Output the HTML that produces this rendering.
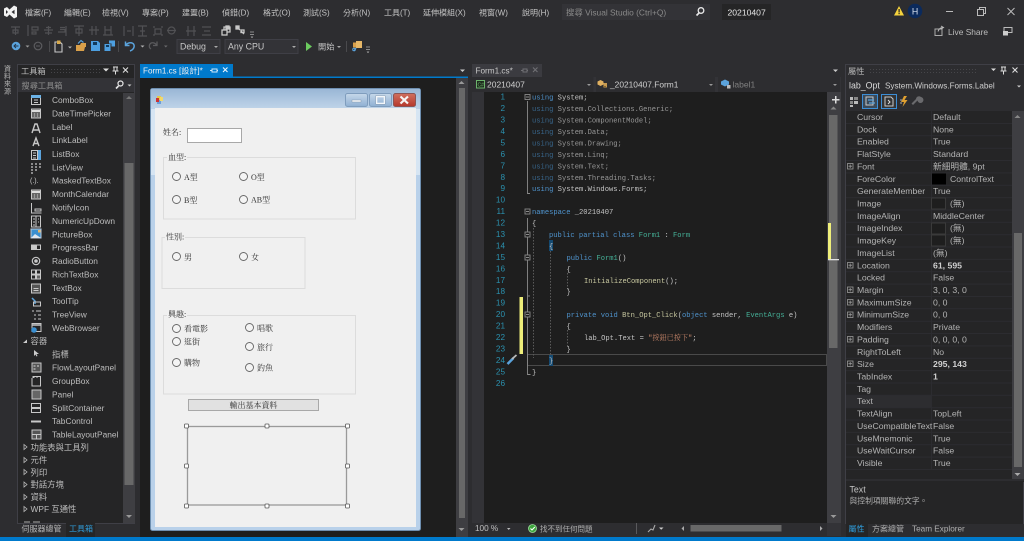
<!DOCTYPE html>
<html><head><meta charset="utf-8"><style>
html,body{margin:0;padding:0;background:#2d2d30;width:1024px;height:541px;overflow:hidden}
svg{display:block;position:absolute;left:0;top:0;filter:blur(.3px)}
text{font-family:"Liberation Sans","Noto Sans CJK TC",sans-serif;font-size:8.6px;fill:#c8c8c8;white-space:pre}
.m text{font-size:8px;fill:#c4c4c4}
.d text{font-size:8.35px;fill:#bdbdbd}
.p text{font-size:8.7px;fill:#b4b4b4}
.f text{font-family:"Liberation Serif","Noto Serif CJK TC",serif;font-size:8px;fill:#333}
.c text{font-family:"Liberation Mono","Noto Serif CJK TC",monospace;font-size:7.13px;fill:#c4c4c4}
.n text{font-family:"Liberation Sans",sans-serif;font-size:8.2px;fill:#2b91af;text-anchor:end}
.k{fill:#4f93cc!important}.uk{fill:#38658a!important}.ty{fill:#45b097!important}.s{fill:#c8866a!important}.u{fill:#979797!important}.me{fill:#c8c8a0!important}
</style></head><body>
<svg width="1024" height="541" viewBox="0 0 1024 541">
<defs>
<linearGradient id="tg" x1="0" y1="0" x2="0" y2="1"><stop offset="0" stop-color="#9ab7d6"/><stop offset="1" stop-color="#bed3e8"/></linearGradient>
<linearGradient id="cg" x1="0" y1="0" x2="0" y2="1"><stop offset="0" stop-color="#d0705f"/><stop offset="1" stop-color="#b5382c"/></linearGradient>
<linearGradient id="bg" x1="0" y1="0" x2="0" y2="1"><stop offset="0" stop-color="#c6d8ea"/><stop offset="1" stop-color="#8fb0d2"/></linearGradient>
<pattern id="dots" width="3" height="3" patternUnits="userSpaceOnUse"><rect width="1" height="1" fill="#46464a"/></pattern>
</defs>
<rect width="1024" height="541" fill="#2d2d30"/>
<!-- VS logo -->
<path d="M4 8.500 7 7 9.500 9.500 14 5.500 17 7v10l-3 1.500-4.500-4L7 17l-3-1.500zM6 10v4l2-2zM11.500 12 14.500 14.300V9.700z" fill="#f2f2f2" fill-rule="evenodd"/>
<g class="m">
<text x="25" y="15.500">檔案(F)</text><text x="64" y="15.500">編輯(E)</text><text x="102" y="15.500">檢視(V)</text><text x="142" y="15.500">專案(P)</text><text x="182" y="15.500">建置(B)</text><text x="222" y="15.500">偵錯(D)</text><text x="263" y="15.500">格式(O)</text><text x="303" y="15.500">測試(S)</text><text x="343" y="15.500">分析(N)</text><text x="384" y="15.500">工具(T)</text><text x="423" y="15.500">延伸模組(X)</text><text x="479" y="15.500">視窗(W)</text><text x="522" y="15.500">說明(H)</text>
</g>
<!-- search + title -->
<rect x="562" y="4" width="148" height="16" fill="#333337"/>
<text x="566" y="15.500" style="fill:#8a8a8a;font-size:8.400px">搜尋 Visual Studio (Ctrl+Q)</text>
<circle cx="701" cy="10.500" r="2.800" fill="none" stroke="#e8e8e8" stroke-width="1.300"/><path d="M699 13 696.500 15.500" stroke="#e8e8e8" stroke-width="1.700"/>
<rect x="722" y="4" width="49" height="16" fill="#252526"/>
<text x="727.500" y="15.500" style="fill:#e6e6e6;font-size:8.600px">20210407</text>
<path d="M899 6 904 15.500H894z" fill="#f5d33d"/><rect x="898.500" y="9" width="1.200" height="3.500" fill="#222"/><rect x="898.500" y="13" width="1.200" height="1.200" fill="#222"/>
<circle cx="915" cy="11" r="7.300" fill="#0b2a5c"/><text x="915" y="14.300" text-anchor="middle" style="fill:#d8e2f0;font-size:8.800px">H</text>
<path d="M946 11.500h7" stroke="#bbb"/>
<rect x="977.500" y="9.500" width="6" height="6" fill="none" stroke="#bbb"/><path d="M979.500 9.500V7.500h6v6h-2" fill="none" stroke="#bbb"/>
<path d="M1007.500 8l7 7m0-7-7 7" stroke="#bbb"/>
<!-- toolbar row 1 -->
<rect x="4" y="25" width="1" height="11" fill="url(#dots)"/>
<g stroke="#515154" fill="none" stroke-width="1.200">
<path d="M11 27h9M15.500 27v8M13 30h5v3h-5z"/>
<path d="M28 25v11M32 27h6v3h-6zM32 32h4v2h-4z"/><path d="M44 30h9M48.500 26v9M46 27.500h5M45 33h7"/>
<path d="M66 26v10M60 27.500h5M58 32h7M60 29.500h5v3"/><path d="M74 26h10M79 26v10M76 29h6v4h-6z"/><path d="M89 30h10M92 26v9M96 26v9"/>
<path d="M103 35h10M105 26v9M111 26v9M105 30h6"/><path d="M124 26v10M133 26v10M127 31h4"/><path d="M138 26h9M138 36h9M142.500 26v10M140 31h5"/>
<path d="M153 27h2M161 27h2M153 35h2M161 35h2M155 29h6v5h-6z"/><circle cx="171.500" cy="30.500" r="3.500"/><path d="M167 30.500h9"/>
<path d="M188 26v10M194 26v10M186 31h10"/><path d="M202 27h9M202 35h9M204 31h6"/>
</g>
<g stroke="#c8c8c8" fill="none" stroke-width="1.300">
<rect x="222" y="30" width="5" height="5"/><path d="M224 30v-3h6v5h-3"/><rect x="226" y="26" width="3" height="3" fill="#c8c8c8"/>
<path d="M237 27l3 3m1 1 3 3"/><rect x="236" y="26" width="3" height="3" fill="#c8c8c8"/><rect x="241" y="30" width="3" height="2.500"/>
</g>
<path d="M250 32h4M250 34.500h4M251 36.500l1 1 1-1" stroke="#aaa" stroke-width=".8" fill="none"/>
<!-- toolbar row 2 -->
<circle cx="16" cy="46" r="4.300" fill="#5ba3dc"/><path d="M18.500 46h-4.500m2-2-2 2 2 2" stroke="#20364c" fill="none"/>
<path d="M25.500 45.500h4l-2 2z" fill="#9a9a9a"/>
<circle cx="38" cy="46" r="3.800" fill="none" stroke="#5c5c5f" stroke-width="1.200"/><path d="M36 46h4" stroke="#5c5c5f"/>
<path d="M49.500 41v11" stroke="#4a4a4d"/>
<path d="M55 42h5l2 2v8h-7z" fill="none" stroke="#c8c8c8" stroke-width="1.100"/><rect x="57" y="40.500" width="3.500" height="3.500" fill="#d6a94c"/>
<path d="M68 46.500h4l-2 2z" fill="#b0b0b0"/>
<path d="M76 45h4l1-2h5v4h-1l-1 4H76z" fill="#d9a04a"/><path d="M78 43.500l3-3 2.500 2" stroke="#5ba3dc" fill="none" stroke-width="1.200"/>
<path d="M91 41h7l2 2v8h-9z" fill="#4d9fe0"/><rect x="93" y="42" width="4" height="3" fill="#123a5c"/>
<path d="M104.500 44h6v7h-6z" fill="#4d9fe0"/><path d="M109 40.500h6v6h-3.500v-3H109z" fill="#4d9fe0"/><rect x="106" y="45" width="3" height="2" fill="#123a5c"/>
<path d="M118.500 41v11" stroke="#4a4a4d"/>
<path d="M125.500 41.500v4h4M126 45c2-3 7-3 8 0 .7 2.500-1 5-4 6" fill="none" stroke="#5ba3dc" stroke-width="1.500"/>
<path d="M140.500 45.500h4l-2 2z" fill="#b0b0b0"/>
<path d="M157 41.500v4h-4M156.500 45c-2-3-6-3-7 0-.5 1.500 0 3 1.500 4" fill="none" stroke="#5a5a5d" stroke-width="1.300"/>
<path d="M164 45.500h3.600l-1.800 2z" fill="#6a6a6d"/>
<rect x="177" y="39.500" width="43" height="14" fill="#333337" stroke="#3f3f46"/>
<text x="180" y="49.500" style="fill:#c8c8c8;font-size:8.800px">Debug</text><path d="M214 46h4l-2 2z" fill="#aaa"/>
<rect x="225" y="39.500" width="73" height="14" fill="#333337" stroke="#3f3f46"/>
<text x="228" y="49.500" style="fill:#c8c8c8;font-size:8.800px">Any CPU</text><path d="M292 46h4l-2 2z" fill="#aaa"/>
<path d="M306 42l6 4.500-6 4.500z" fill="#6ccb5f"/>
<text x="318" y="49.500" style="font-size:8.200px;fill:#c8c8c8">開始</text><path d="M337 46h4l-2 2z" fill="#aaa"/>
<path d="M346.500 41v11" stroke="#4a4a4d"/>
<rect x="353" y="42.500" width="6" height="5" fill="#d9a04a"/><rect x="356" y="41" width="6" height="7" fill="#e5b768"/><path d="M356 48l-2 3" stroke="#5ba3dc" stroke-width="1.300"/><circle cx="354" cy="49.500" r="1.300" fill="none" stroke="#5ba3dc"/>
<path d="M366 47h4M366 49.500h4M367 51.500l1 1 1-1" stroke="#aaa" stroke-width=".8" fill="none"/>
<!-- live share -->
<rect x="935" y="29" width="7" height="6.500" fill="none" stroke="#aaa"/><path d="M938 31.500c1-3 3-4 5-4m-2-1.500 2.500 1.500-2.500 1.500" fill="none" stroke="#bbb"/>
<text x="948" y="34.800" style="font-size:8.400px;fill:#bcbcbc">Live Share</text>
<rect x="1004" y="27.500" width="8" height="5" fill="none" stroke="#bbb"/><rect x="1003" y="31" width="5" height="4.500" fill="#ccc"/>
<!-- left strip -->
<g><text x="4" y="71" style="font-size:7px;fill:#b4b4b4">資</text><text x="4" y="78.500" style="font-size:7px;fill:#b4b4b4">料</text><text x="4" y="86" style="font-size:7px;fill:#b4b4b4">來</text><text x="4" y="93.500" style="font-size:7px;fill:#b4b4b4">源</text></g>
<!-- toolbox -->
<rect x="17" y="64" width="118" height="460" fill="#252526"/>
<rect x="17.500" y="64.500" width="117" height="459" fill="none" stroke="#3f3f46"/>
<text x="21" y="73.800" style="fill:#bcbcbc;font-size:8.200px">工具箱</text>
<rect x="50" y="67" width="51" height="6" fill="url(#dots)"/>
<path d="M103 68.500h6l-3 3z" fill="#ddd"/><path d="M113 67h5M114 67v4h3v-4M112.500 71h6M115.500 71v3.500" stroke="#ddd" fill="none"/><path d="M123 67.500l5 5m0-5-5 5" stroke="#ddd" stroke-width="1.100"/>
<rect x="18" y="78" width="116" height="14" fill="#333337"/>
<text x="21.500" y="88.500" style="fill:#8e8e8e;font-size:8.200px">搜尋工具箱</text>
<circle cx="120.500" cy="83.500" r="2.500" fill="none" stroke="#e8e8e8" stroke-width="1.200"/><path d="M118.500 86l-2.500 2.500" stroke="#e8e8e8" stroke-width="1.600"/><path d="M127.500 84.500h4l-2 2z" fill="#ccc"/>
<rect x="123" y="93" width="12" height="430" fill="#3e3e42"/><rect x="124.500" y="163" width="9" height="322" fill="#686868"/>
<path d="M129 96l-3 3h6z" fill="#777"/><path d="M129 518l3-3h-6z" fill="#999"/>
<g class="d">
<text x="52" y="103">ComboBox</text><text x="52" y="116.500">DateTimePicker</text><text x="52" y="130">Label</text><text x="52" y="143">LinkLabel</text><text x="52" y="157">ListBox</text><text x="52" y="170.500">ListView</text><text x="52" y="183.500">MaskedTextBox</text><text x="52" y="197">MonthCalendar</text><text x="52" y="210.500">NotifyIcon</text><text x="52" y="224">NumericUpDown</text><text x="52" y="237.500">PictureBox</text><text x="52" y="250.500">ProgressBar</text><text x="52" y="264">RadioButton</text><text x="52" y="277.500">RichTextBox</text><text x="52" y="291">TextBox</text><text x="52" y="304">ToolTip</text><text x="52" y="317.500">TreeView</text><text x="52" y="331">WebBrowser</text>
<text x="30.500" y="344">容器</text><text x="52" y="357.500">指標</text><text x="52" y="370.500">FlowLayoutPanel</text><text x="52" y="384">GroupBox</text><text x="52" y="397.500">Panel</text><text x="52" y="411">SplitContainer</text><text x="52" y="424">TabControl</text><text x="52" y="437.500">TableLayoutPanel</text>
<text x="30.500" y="450.500">功能表與工具列</text><text x="30.500" y="463">元件</text><text x="30.500" y="475.500">列印</text><text x="30.500" y="487.500">對話方塊</text><text x="30.500" y="500">資料</text><text x="30.500" y="512">WPF 互通性</text>
</g>
<path d="M23 343l4-3.500V343z" fill="#ccc"/>
<path d="M24 444.500l3 2.500-3 2.500zM24 457.500l3 2.500-3 2.500zM24 469.500l3 2.500-3 2.500zM24 482l3 2.500-3 2.500zM24 494.500l3 2.500-3 2.500zM24 506.500l3 2.500-3 2.500z" fill="none" stroke="#bbb" stroke-width=".8"/>
<path d="M24 522h6M33 522h7" stroke="#aaa"/>
<!-- toolbox icons -->
<g fill="none" stroke="#c8c8c8" stroke-width="1">
<rect x="31.500" y="95.500" width="9" height="9"/><rect x="31" y="95" width="10" height="3" fill="#6bb2e6" stroke="none"/><path d="M34 100h4M34 102.500h4"/>
<rect x="31.500" y="109" width="9" height="9" fill="#666"/><path d="M32 111h8" stroke="#ddd" stroke-width="2"/><path d="M34 114h1M37 114h1M34 116h1M37 116h1"/>
<path d="M32 133l3-9h2l3 9M33.500 130h5" stroke-width="1.400"/>
<path d="M33 146l3-8 3 8M34 143.500h4" stroke-width="1.400"/>
<rect x="31.500" y="150.500" width="6" height="9"/><path d="M33 153h3M33 155.500h3M33 158h3"/><rect x="38" y="150" width="3" height="10" fill="#5ba3dc" stroke="none"/>
<path d="M31 164h2M35 164h2M39 164h2M31 167h2M35 167h2M39 167h2M31 170h2M35 170h2M31 173h2" stroke-width="1.300"/>
<text x="30" y="183" style="font-size:7px;fill:#ccc;stroke:none">(.).</text>
<rect x="31.500" y="190" width="9" height="9" fill="#666"/><path d="M32 192h8" stroke="#ddd" stroke-width="2"/><path d="M34 195h1M37 195h1M34 197h1M37 197h1"/>
<path d="M31.500 203v10h10M35 209h6v2h-6z"/>
<rect x="31.500" y="216" width="9" height="11"/><path d="M36 216v11M33 219h2M33 222h2M33 225h2M38 219h1M38 222h1"/>
<rect x="31" y="229" width="10" height="9" fill="#3a8fd0" stroke="#bcd"/><path d="M31 238l4-4 6 4" fill="#dfe6ee" stroke="none"/><rect x="38" y="230" width="2.500" height="2.500" fill="#e5b768" stroke="none"/>
<rect x="31.500" y="245" width="9" height="4.500"/><rect x="32.500" y="246" width="4" height="2.500" fill="#ccc"/>
<circle cx="36" cy="261" r="3.700" stroke-width="1.200"/><circle cx="36" cy="261" r="1.300" fill="#ccc"/>
<rect x="31.500" y="270" width="4" height="4"/><rect x="36.500" y="270" width="4" height="4"/><rect x="31.500" y="275" width="4" height="4"/><rect x="36.500" y="275" width="4" height="4" fill="#666"/>
<rect x="31.500" y="284" width="9" height="9" fill="#555"/><path d="M33.500 288.500h5M33.500 290.500h5"/>
<path d="M32 298l3 3v3" stroke="#5ba3dc" stroke-width="1.500"/><rect x="33.500" y="302" width="7" height="4"/>
<path d="M32 311h2M36 311h5M34 315h2M38 315h3M34 319h2M38 319h3"/>
<rect x="32" y="323.500" width="9" height="8"/><circle cx="34" cy="330" r="2.800" fill="#3a8fd0" stroke="none"/><path d="M32 325h9" stroke-width="1.500"/>
<path d="M34 350v6l1.500-1.500 1 2 1-.5-1-2h2.500z" fill="#ccc" stroke="none"/>
<rect x="32" y="363" width="9" height="9" fill="#555"/><path d="M33.500 366h2M37 366h2M33.500 369h2" stroke="#ddd"/>
<path d="M33 378v-1.500h7.500V386H32V378M34 376v2M37 376v2"/>
<rect x="32" y="390" width="9" height="9" fill="#666"/>
<rect x="31.500" y="403.500" width="9" height="9"/><path d="M32 408h8" stroke-width="2"/>
<path d="M31 421.500h10" stroke-width="2"/>
<rect x="32" y="430" width="9" height="9" fill="#555"/><path d="M32 434.500h9M36.500 434.500V439"/>
</g>
<!-- toolbox tabs -->
<rect x="17" y="524" width="49" height="13" fill="#2d2d30"/>
<text x="21.500" y="531.500" style="font-size:8px;fill:#b4b4b4">伺服器總管</text>
<rect x="66" y="523" width="29" height="14" fill="#252526"/>
<text x="69" y="531.500" style="font-size:8px;fill:#2f9bd8">工具箱</text>
<!-- designer -->
<rect x="140" y="64" width="93" height="13" fill="#007acc"/>
<text x="143" y="73.500" style="fill:#f0f0f0;font-size:8.100px">Form1.cs [設計]*</text>
<rect x="212" y="69" width="5" height="3" fill="none" stroke="#d0e8f8"/><path d="M210 70.500h2M217 70.500h1" stroke="#d0e8f8"/>
<path d="M223 67.500l4.500 4.500m0-4.500-4.500 4.500" stroke="#eaf4fc" stroke-width="1.100"/>
<path d="M460 69.500h5l-2.500 2.500z" fill="#ccc"/>
<rect x="140" y="76.500" width="328" height="1.500" fill="#007acc"/>
<rect x="140" y="78" width="328" height="459" fill="#1e1e1e"/>
<rect x="456" y="78" width="12" height="459" fill="#3e3e42"/>
<rect x="459" y="88" width="6" height="430" fill="#686868"/>
<path d="M461.500 81l-3 3h6z" fill="#999"/><path d="M461.500 531l3-3h-6z" fill="#999"/>
<!-- form window -->
<rect x="150.500" y="88.500" width="270" height="442" rx="2" fill="#b9d1ea" stroke="#6e8fb0"/>
<rect x="151" y="89" width="269" height="19" fill="url(#tg)"/>
<rect x="151" y="109" width="4" height="66" fill="#d6e5f3"/><rect x="416" y="109" width="4" height="66" fill="#d6e5f3"/>
<rect x="155" y="108" width="261" height="419" fill="#f0f0f0"/>
<rect x="157" y="96" width="4" height="4" fill="#e8c84a"/><rect x="157" y="100" width="4" height="4" fill="#6a9fd8"/><rect x="156" y="98" width="3" height="4" fill="#c33"/><rect x="160" y="97" width="3" height="4" fill="#f1d86a"/>
<rect x="345.500" y="93.500" width="22" height="13" rx="2" fill="url(#bg)" stroke="#7f9dbd"/><rect x="352" y="100" width="9" height="2" fill="#f4f7fa" stroke="#7b8ea3" stroke-width=".4"/>
<rect x="369.500" y="93.500" width="22" height="13" rx="2" fill="url(#bg)" stroke="#7f9dbd"/><rect x="376.500" y="96.500" width="8" height="7" fill="none" stroke="#f4f7fa" stroke-width="1.600"/><rect x="375.800" y="95.800" width="9.400" height="8.400" fill="none" stroke="#7b8ea3" stroke-width=".4"/>
<rect x="393.500" y="93.500" width="22" height="13" rx="2" fill="url(#cg)" stroke="#8c5555"/><path d="M400.500 96.500l7.500 7m0-7-7.500 7" stroke="#f5f5f5" stroke-width="2.200"/>
<g class="f">
<text x="163" y="135">姓名:</text><text x="168" y="160">血型:</text><text x="166" y="239.500">性別:</text><text x="168" y="317">興趣:</text>
</g>
<rect x="187.500" y="128.500" width="54" height="14" fill="#fff" stroke="#a8a8a8" stroke-width="1"/>
<path d="M167 157.500h-3.500v61.500h192V157.500H187" fill="none" stroke="#dcdcdc"/>
<path d="M165 237.500h-3v51h143v-51H185" fill="none" stroke="#dcdcdc"/>
<path d="M167 315.500h-3.500v78.500h192V315.500H187" fill="none" stroke="#dcdcdc"/>
<g fill="#f4f4f4" stroke="#666" stroke-width=".9">
<circle cx="176.500" cy="176.500" r="4"/><circle cx="243.500" cy="176.500" r="4"/><circle cx="176.500" cy="199.500" r="4"/><circle cx="243.500" cy="199.500" r="4"/>
<circle cx="176.500" cy="256.500" r="4"/><circle cx="243.500" cy="256.500" r="4"/>
<circle cx="176.500" cy="328.500" r="4"/><circle cx="249.500" cy="327.500" r="4"/><circle cx="176.500" cy="341.500" r="4"/><circle cx="249.500" cy="346.500" r="4"/><circle cx="176.500" cy="362.500" r="4"/><circle cx="249.500" cy="367.500" r="4"/>
</g>
<g class="f">
<text x="184" y="180">A型</text><text x="251" y="180">O型</text><text x="184" y="203">B型</text><text x="251" y="202.500">AB型</text>
<text x="184" y="260">男</text><text x="251" y="260">女</text>
<text x="184" y="331.500">看電影</text><text x="257" y="331">唱歌</text><text x="184" y="344.500">逛街</text><text x="257" y="350">旅行</text><text x="184" y="365.500">購物</text><text x="257" y="370.500">釣魚</text>
</g>
<rect x="188.500" y="399.500" width="130" height="11" fill="#e1e1e1" stroke="#a8a8a8"/>
<g class="f"><text x="253.500" y="408" text-anchor="middle" style="font-size:8px">輸出基本資料</text></g>
<rect x="187.500" y="426.500" width="159" height="78.500" fill="none" stroke="#9a9a9a" stroke-width="1.300"/>
<g fill="#fff" stroke="#555" stroke-width=".8">
<rect x="184.500" y="424" width="4" height="4" rx=".8"/><rect x="265" y="424" width="4" height="4" rx=".8"/><rect x="345.500" y="424" width="4" height="4" rx=".8"/>
<rect x="184.500" y="464" width="4" height="4" rx=".8"/><rect x="345.500" y="464" width="4" height="4" rx=".8"/>
<rect x="184.500" y="504" width="4" height="4" rx=".8"/><rect x="265" y="504" width="4" height="4" rx=".8"/><rect x="345.500" y="504" width="4" height="4" rx=".8"/>
</g>
<!-- editor tab -->
<rect x="472" y="64" width="70" height="13" fill="#3b3b40"/>
<text x="475.500" y="73.500" style="fill:#c8c8c8;font-size:8.200px">Form1.cs*</text>
<rect x="523" y="69" width="4" height="3" fill="none" stroke="#6f6f73"/><path d="M521 70.500h2M527 70.500h1" stroke="#6f6f73"/>
<path d="M533 67.500l4.500 4.500m0-4.500-4.500 4.500" stroke="#6f6f73" stroke-width="1.100"/>
<path d="M833 69.500h5l-2.500 2.500z" fill="#ccc"/>
<!-- nav bar -->
<rect x="472" y="77" width="369" height="15" fill="#333337"/>
<rect x="472" y="77" width="121.500" height="15" fill="#2d2d30"/><rect x="596" y="77" width="119" height="15" fill="#2d2d30"/><rect x="718" y="77" width="122" height="15" fill="#2d2d30"/>
<rect x="476.500" y="80.500" width="8" height="7.500" fill="#1d2a1d" stroke="#6cb36c"/><text x="477.500" y="86.500" style="font-size:5px;fill:#6cb36c">C#</text>
<text x="487" y="87.500" style="font-size:8.500px;fill:#d0d0d0">20210407</text>
<path d="M587 84h4l-2 2z" fill="#999"/>
<path d="M600.500 80l3 1.500v3l-3 1.500-3-1.500v-3z" fill="#e0b060"/><rect x="603.500" y="83" width="3.500" height="4.500" fill="#c89a50"/><path d="M603 86.500h3" stroke="#8a6a30"/>
<text x="610" y="87.500" style="font-size:8.400px;fill:#d0d0d0">_20210407.Form1</text>
<path d="M709 84h4l-2 2z" fill="#999"/>
<path d="M725 79.500l4 2v3l-4 2-4-2v-3z" fill="#5ba3dc"/><rect x="727" y="85" width="3.500" height="3.500" fill="#bbb"/>
<text x="732.500" y="87.500" style="font-size:8.500px;fill:#808080">label1</text>
<path d="M833 84h4l-2 2z" fill="#999"/>
<!-- editor -->
<rect x="472" y="92" width="369" height="444" fill="#2d2d30"/>
<rect x="484" y="92" width="343" height="431" fill="#1e1e1e"/>
<rect x="472" y="92" width="12" height="431" fill="#333337"/>
<rect x="827" y="92" width="14" height="431" fill="#3e3e42"/>
<rect x="829" y="115" width="8.500" height="233" fill="#686868"/>
<rect x="828" y="223" width="3" height="36" fill="#efef7a"/><rect x="828" y="259" width="11" height="1.300" fill="#e0e0e0"/>
<path d="M833 98h3v-3h1.500v3h3v1.500h-3v3h-1.500v-3h-3z" fill="#ddd" transform="translate(-1,1)"/>
<path d="M833.500 106.500l-3 3h6z" fill="#888"/><path d="M833.500 518l3-3h-6z" fill="#9a9a9a"/>
<rect x="519.500" y="297" width="3.500" height="57" fill="#efef7a"/>
<rect x="527.500" y="354.500" width="299" height="11" fill="none" stroke="#4a4a4a"/>
<rect x="549" y="240" width="4" height="11" fill="#144a72"/><rect x="549" y="355" width="4" height="11" fill="#144a72"/>
<g class="n">
<text x="505" y="99.500">1</text><text x="505" y="111">2</text><text x="505" y="122.500">3</text><text x="505" y="134">4</text><text x="505" y="145.500">5</text><text x="505" y="157">6</text><text x="505" y="168.500">7</text><text x="505" y="180">8</text><text x="505" y="191">9</text><text x="505" y="202.500">10</text><text x="505" y="214">11</text><text x="505" y="225.500">12</text><text x="505" y="237">13</text><text x="505" y="248.500">14</text><text x="505" y="260">15</text><text x="505" y="271.500">16</text><text x="505" y="283">17</text><text x="505" y="294">18</text><text x="505" y="305.500">19</text><text x="505" y="317">20</text><text x="505" y="328.500">21</text><text x="505" y="340">22</text><text x="505" y="351.500">23</text><text x="505" y="363">24</text><text x="505" y="374.500">25</text><text x="505" y="386">26</text>
</g>
<!-- fold -->
<g fill="none" stroke="#8a8a8a" stroke-width=".9">
<path d="M527.500 101v92.500h2.500"/><path d="M527.500 218v156.500h3"/><path d="M527.500 296h2.500"/>
<rect x="525" y="94.500" width="5" height="5" fill="#1e1e1e"/><rect x="525" y="209" width="5" height="5" fill="#1e1e1e"/><rect x="525" y="232" width="5" height="5" fill="#1e1e1e"/><rect x="525" y="255" width="5" height="5" fill="#1e1e1e"/><rect x="525" y="312" width="5" height="5" fill="#1e1e1e"/>
<path d="M526 97h3M526 211.500h3M526 234.500h3M526 257.500h3M526 314.500h3"/>
</g>
<g stroke="#5a5a5a" stroke-dasharray="1.500 1.500" fill="none">
<path d="M533.500 228v130M550.500 251v105M567.500 273v17M567.500 330v16"/>
</g>
<g class="c">
<text x="532" y="99.500"><tspan class="k">using</tspan> System;</text>
<text x="532" y="111"><tspan class="uk">using</tspan> <tspan class="u">System.Collections.Generic;</tspan></text>
<text x="532" y="122.500"><tspan class="uk">using</tspan> <tspan class="u">System.ComponentModel;</tspan></text>
<text x="532" y="134"><tspan class="uk">using</tspan> <tspan class="u">System.Data;</tspan></text>
<text x="532" y="145.500"><tspan class="uk">using</tspan> <tspan class="u">System.Drawing;</tspan></text>
<text x="532" y="157"><tspan class="uk">using</tspan> <tspan class="u">System.Linq;</tspan></text>
<text x="532" y="168.500"><tspan class="uk">using</tspan> <tspan class="u">System.Text;</tspan></text>
<text x="532" y="180"><tspan class="uk">using</tspan> <tspan class="u">System.Threading.Tasks;</tspan></text>
<text x="532" y="191"><tspan class="k">using</tspan> System.Windows.Forms;</text>
<text x="532" y="214"><tspan class="k">namespace</tspan> _20210407</text>
<text x="532" y="225.500">{</text>
<text x="549" y="237"><tspan class="k">public partial class</tspan> <tspan class="ty">Form1</tspan> : <tspan class="ty">Form</tspan></text>
<text x="549" y="248.500">{</text>
<text x="566.500" y="260"><tspan class="k">public</tspan> <tspan class="ty">Form1</tspan>()</text>
<text x="566.500" y="271.500">{</text>
<text x="584" y="283"><tspan class="me">InitializeComponent</tspan>();</text>
<text x="566.500" y="294">}</text>
<text x="566.500" y="317"><tspan class="k">private void</tspan> <tspan class="me">Btn_Opt_Click</tspan>(<tspan class="k">object</tspan> sender, <tspan class="ty">EventArgs</tspan> e)</text>
<text x="566.500" y="328.500">{</text>
<text x="584" y="340">lab_Opt.Text = <tspan class="s">"按鈕已按下"</tspan>;</text>
<text x="566.500" y="351.500">}</text>
<text x="549" y="363">}</text>
<text x="532" y="374.500">}</text>
</g>
<path d="M507.500 364l6-6" stroke="#5ba3dc" stroke-width="2.500"/><path d="M512 359l4.500-4" stroke="#b8b8b8" stroke-width="1.800"/>
<!-- editor bottom -->
<rect x="472" y="523" width="369" height="13" fill="#2d2d30"/>
<rect x="827" y="523" width="14" height="13" fill="#333337"/>
<text x="475" y="531" style="font-size:8.200px;fill:#c0c0c0">100 %</text><path d="M507 528h3.500l-1.800 2z" fill="#bbb"/>
<circle cx="532.500" cy="528.500" r="4" fill="#3da53d" stroke="#9ddb9d" stroke-width=".8"/><path d="M530.500 528.500l1.500 1.500 2.800-3" stroke="#fff" fill="none" stroke-width="1.100"/>
<text x="540" y="531.500" style="font-size:7.500px;fill:#b0b0b0">找不到任何問題</text>
<path d="M636.500 523v11" stroke="#5a5a5d"/>
<path d="M648 532l3-3 2 1 2-5" stroke="#aaa" fill="none" stroke-width="1.100"/><path d="M659 527.500h4.500l-2.300 2.300z" fill="#ccc"/>
<path d="M684 526v5l-2.500-2.500z" fill="#aaa"/>
<rect x="690.500" y="525" width="91" height="6.500" fill="#686868"/>
<path d="M820 526v5l2.500-2.500z" fill="#aaa"/>
<!-- properties -->
<rect x="845" y="64" width="179" height="473" fill="#252526"/>
<rect x="845.500" y="64.500" width="178" height="460" fill="none" stroke="#3f3f46"/>
<rect x="846" y="65" width="178" height="13" fill="#2d2d30"/>
<text x="848" y="73.800" style="font-size:8.200px;fill:#b4b4b4">屬性</text>
<rect x="868" y="67" width="110" height="6" fill="url(#dots)"/>
<path d="M991 68.500h5l-2.500 2.500z" fill="#ddd"/><path d="M1001 67h5M1002 67v4h3v-4M1000.500 71h6M1003.500 71v3.500" stroke="#ddd" fill="none"/><path d="M1012.500 67.500l5 5m0-5-5 5" stroke="#ddd" stroke-width="1.100"/>
<rect x="846" y="78" width="178" height="14" fill="#2d2d30"/>
<text x="849" y="88.500" style="font-size:8.800px;fill:#dcdcdc">lab_Opt</text><text x="885" y="88.500" style="font-size:8.150px;fill:#cfcfcf">System.Windows.Forms.Label</text>
<path d="M1017 85.500h4l-2 2z" fill="#ccc"/>
<rect x="846" y="92" width="178" height="19" fill="#2d2d30"/>
<rect x="850" y="97" width="3" height="3" fill="#bbb"/><rect x="854" y="97" width="4" height="3" fill="#888"/><rect x="850" y="101" width="3" height="3" fill="#888"/><rect x="854" y="101" width="4" height="3" fill="#bbb"/><rect x="850" y="105" width="3" height="2" fill="#bbb"/>
<rect x="862.500" y="94.500" width="15" height="14" fill="#3a4a5a" stroke="#3c8ed6"/><rect x="866" y="97" width="7" height="8" fill="none" stroke="#c8c8c8"/><path d="M868 100h6M869 103h6" stroke="#5ba3dc" stroke-width="1.200"/>
<rect x="881.500" y="94.500" width="15" height="14" fill="#333" stroke="#3c8ed6"/><path d="M885 97h6l2 2v7h-8z" fill="none" stroke="#c8c8c8"/><path d="M888 100l2 2-2 2" fill="none" stroke="#ddd"/>
<path d="M904 96l-3 6h3l-1.500 5 5-7h-3l2.500-4z" fill="#e0a030"/><path d="M900 100h2M900 103h2" stroke="#aaa"/>
<path d="M921 97a3 3 0 1 1-3.500 3.500l-4.500 4.500-1.500-1.500 4.500-4.500A3 3 0 0 1 921 97z" fill="#6a6a6d"/>
<rect x="846" y="111" width="178" height="371" fill="#252526"/>
<g stroke="#2c2c30">
<path d="M931.500 111V470"/>
<path d="M846 123.500H1012M846 135.800H1012M846 148.200H1012M846 160.500H1012M846 172.900H1012M846 185.200H1012M846 197.600H1012M846 210H1012M846 222.300H1012M846 234.700H1012M846 247H1012M846 259.400H1012M846 271.800H1012M846 284.100H1012M846 296.500H1012M846 308.800H1012M846 321.200H1012M846 333.500H1012M846 345.900H1012M846 358.300H1012M846 370.600H1012M846 383H1012M846 395.300H1012M846 407.700H1012M846 420H1012M846 432.400H1012M846 444.800H1012M846 457.100H1012M846 469.500H1012"/>
</g>
<rect x="846" y="395.500" width="85" height="12" fill="#2d2d30"/>
<rect x="1012" y="111" width="12" height="368" fill="#3e3e42"/>
<rect x="1014" y="233" width="8" height="234" fill="#686868"/>
<path d="M1017.500 115l-3 3h6z" fill="#888"/><path d="M1017.500 476l3-3h-6z" fill="#aaa"/>
<g class="p">
<text x="857" y="120">Cursor</text><text x="933" y="120">Default</text>
<text x="857" y="132.300">Dock</text><text x="933" y="132.300">None</text>
<text x="857" y="144.700">Enabled</text><text x="933" y="144.700">True</text>
<text x="857" y="157">FlatStyle</text><text x="933" y="157">Standard</text>
<text x="857" y="169.400">Font</text><text x="933" y="169.400">新細明體, 9pt</text>
<text x="857" y="181.800">ForeColor</text><text x="950" y="181.800">ControlText</text>
<text x="857" y="194.100">GenerateMember</text><text x="933" y="194.100">True</text>
<text x="857" y="206.500">Image</text><text x="950" y="206.500">(無)</text>
<text x="857" y="218.800">ImageAlign</text><text x="933" y="218.800">MiddleCenter</text>
<text x="857" y="231.200">ImageIndex</text><text x="950" y="231.200">(無)</text>
<text x="857" y="243.500">ImageKey</text><text x="950" y="243.500">(無)</text>
<text x="857" y="255.900">ImageList</text><text x="933" y="255.900">(無)</text>
<text x="857" y="268.300">Location</text><text x="933" y="268.300" style="font-weight:bold;fill:#d0d0d0">61, 595</text>
<text x="857" y="280.600">Locked</text><text x="933" y="280.600">False</text>
<text x="857" y="293">Margin</text><text x="933" y="293">3, 0, 3, 0</text>
<text x="857" y="305.300">MaximumSize</text><text x="933" y="305.300">0, 0</text>
<text x="857" y="317.700">MinimumSize</text><text x="933" y="317.700">0, 0</text>
<text x="857" y="330">Modifiers</text><text x="933" y="330">Private</text>
<text x="857" y="342.400">Padding</text><text x="933" y="342.400">0, 0, 0, 0</text>
<text x="857" y="354.800">RightToLeft</text><text x="933" y="354.800">No</text>
<text x="857" y="367.100">Size</text><text x="933" y="367.100" style="font-weight:bold;fill:#d0d0d0">295, 143</text>
<text x="857" y="379.500">TabIndex</text><text x="933" y="379.500" style="font-weight:bold;fill:#d0d0d0">1</text>
<text x="857" y="391.800">Tag</text>
<text x="857" y="404.200">Text</text>
<text x="857" y="416.500">TextAlign</text><text x="933" y="416.500">TopLeft</text>
<text x="857" y="428.900">UseCompatibleText</text><text x="933" y="428.900">False</text>
<text x="857" y="441.300">UseMnemonic</text><text x="933" y="441.300">True</text>
<text x="857" y="453.600">UseWaitCursor</text><text x="933" y="453.600">False</text>
<text x="857" y="466">Visible</text><text x="933" y="466">True</text>
</g>
<rect x="932" y="173.500" width="14" height="11" fill="#000"/>
<g fill="#1e1e1e" stroke="#3a3a3a"><rect x="931.500" y="198" width="14" height="11"/><rect x="931.500" y="223" width="14" height="11"/><rect x="931.500" y="235" width="14" height="11"/></g>
<g fill="none" stroke="#9a9a9a" stroke-width=".8">
<rect x="847.500" y="163.500" width="5.500" height="5.500"/><rect x="847.500" y="262.500" width="5.500" height="5.500"/><rect x="847.500" y="287" width="5.500" height="5.500"/><rect x="847.500" y="299.500" width="5.500" height="5.500"/><rect x="847.500" y="312" width="5.500" height="5.500"/><rect x="847.500" y="336.500" width="5.500" height="5.500"/><rect x="847.500" y="361" width="5.500" height="5.500"/>
<path d="M848.500 166.200h3.500M850.200 164.500v3.500M848.500 265.200h3.500M850.200 263.500v3.500M848.500 289.700h3.500M850.200 288v3.500M848.500 302.200h3.500M850.200 300.500v3.500M848.500 314.700h3.500M850.200 313v3.500M848.500 339.200h3.500M850.200 337.500v3.500M848.500 363.700h3.500M850.200 362v3.500"/>
</g>
<rect x="846" y="470" width="166" height="9" fill="#252526"/>
<rect x="846" y="479" width="178" height="2" fill="#2d2d30"/>
<text x="849.500" y="492.500" style="font-size:8.800px;fill:#c4c4c4">Text</text>
<text x="849.500" y="503.500" style="font-size:7.800px;fill:#b0b0b0">與控制項關聯的文字。</text>
<!-- prop tabs -->
<rect x="845" y="524" width="179" height="13" fill="#2d2d30"/>
<rect x="846" y="523" width="22" height="14" fill="#252526"/>
<text x="848.500" y="531.500" style="font-size:8px;fill:#2f9bd8">屬性</text>
<text x="872" y="531.500" style="font-size:8px;fill:#b0b0b0">方案總管</text>
<text x="912" y="531.500" style="font-size:8.200px;fill:#b0b0b0">Team Explorer</text>
<!-- status bar -->
<rect x="0" y="537" width="1024" height="4" fill="#007acc"/>
</svg>
</body></html>
